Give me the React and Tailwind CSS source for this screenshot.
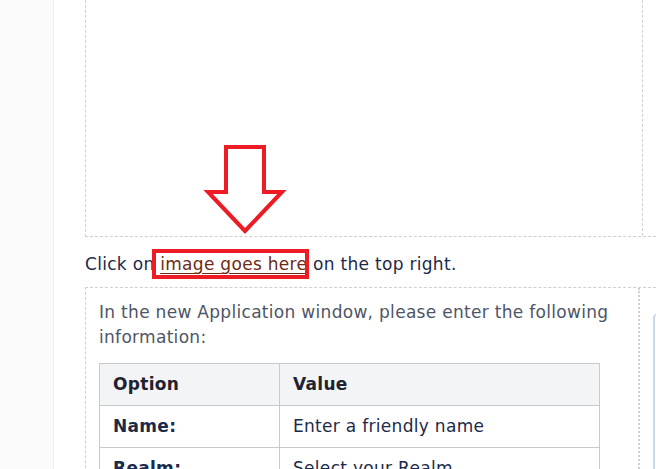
import React from "react"

const rows = [
  { option: "Name:", value: "Enter a friendly name" },
  { option: "Realm:", value: "Select your Realm" },
]

const DownArrow = () => (
  <svg width="90" height="96" viewBox="0 0 90 96" className="absolute left-[116px] top-[142px]">
    <polygon
      points="24,5 62,5 62,50 80,50 43,89 6,50 24,50"
      fill="#ffffff"
      stroke="#ed1c24"
      strokeWidth="4"
      strokeLinejoin="miter"
    />
  </svg>
)

export default function App() {
  return (
    <div className="flex w-[656px] h-[469px] overflow-hidden bg-white font-['DejaVu_Sans',Verdana,sans-serif] text-[17px] tracking-[0.3px]">
      {/* sidebar */}
      <div className="w-[54px] shrink-0 bg-[#fbfbfb] border-r border-[#ececec]" />

      {/* content */}
      <div className="flex-1 pl-[31px]">
        {/* image placeholder */}
        <div className="relative border-l border-b border-dashed border-[#cfcfcf]">
          <div className="h-[236px] w-[557px] border-r border-dashed border-[#cfcfcf]" />
          <DownArrow />
        </div>

        <p className="mt-[15px] mb-[11px] leading-[24px] text-[#1b2a4a]">
          Click on{" "}
          <span className="relative">
            <a className="text-[#6e2a12] underline underline-offset-[3px]">image goes here</a>
            <span className="absolute -left-[8px] -right-[2px] -top-[5px] -bottom-[5px] border-[4px] border-[#ed1c24]" />
          </span>{" "}
          on the top right.
        </p>

        {/* instructions */}
        <div className="relative border-l border-t border-dashed border-[#cfcfcf]">
          <div className="w-[554px] h-[200px] border-r-2 border-dotted border-[#cfcfcf] pl-[13px] pt-[12px]">
            <p className="leading-[25px] text-[#4d5566]">
              In the new Application window, please enter the following information:
            </p>
            <table className="mt-[13px] w-[501px] border-collapse text-[#1b2a4a]">
              <thead>
                <tr className="bg-[#f3f4f6] h-[42px]">
                  <th className="w-[180px] border border-[#c7cad0] pl-[13px] text-left font-bold text-[#1f2330]">Option</th>
                  <th className="border border-[#c7cad0] pl-[13px] text-left font-bold text-[#1f2330]">Value</th>
                </tr>
              </thead>
              <tbody>
                {rows.map((r) => (
                  <tr key={r.option} className="h-[42px]">
                    <td className="border border-[#c7cad0] pl-[13px] font-bold">{r.option}</td>
                    <td className="border border-[#c7cad0] pl-[13px]">{r.value}</td>
                  </tr>
                ))}
              </tbody>
            </table>
          </div>
          <div className="absolute left-[567px] top-[26px] w-[20px] h-[200px] rounded-tl-[4px] border-l-2 border-t border-[#cad8ee]" />
        </div>
      </div>
    </div>
  )
}
